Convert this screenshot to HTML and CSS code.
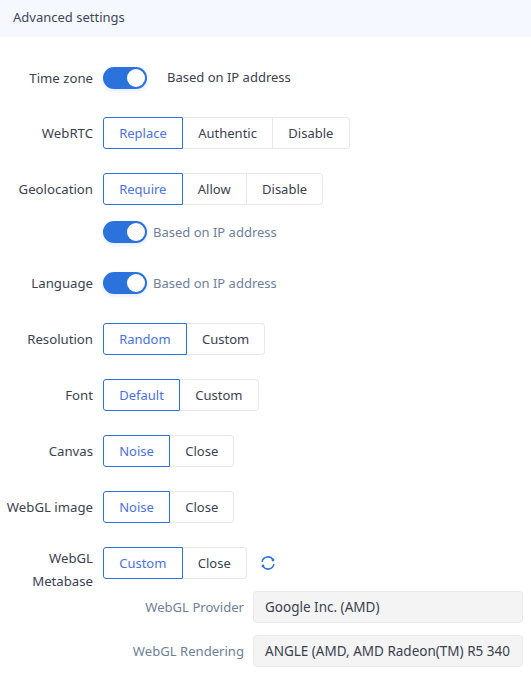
FILE: index.html
```html
<!DOCTYPE html>
<html lang="en">
<head>
<meta charset="utf-8">
<title>Advanced settings</title>
<link rel="stylesheet" href="styles.css">
</head>
<body>
<div class="panel-title">Advanced settings</div>
<form class="form">
  <div class="row row-first">
    <label class="label">Time zone</label>
    <div class="control"><span class="switch"><span class="knob"></span></span><span class="note note-wide">Based on IP address</span></div>
  </div>
  <div class="row">
    <label class="label">WebRTC</label>
    <div class="control"><div class="group"><span class="seg active">Replace</span><span class="seg">Authentic</span><span class="seg">Disable</span></div></div>
  </div>
  <div class="row row-tight">
    <label class="label">Geolocation</label>
    <div class="control"><div class="group"><span class="seg active">Require</span><span class="seg">Allow</span><span class="seg">Disable</span></div></div>
  </div>
  <div class="row row-sub">
    <label class="label"></label>
    <div class="control"><span class="switch"><span class="knob"></span></span><span class="note muted">Based on IP address</span></div>
  </div>
  <div class="row">
    <label class="label">Language</label>
    <div class="control"><span class="switch"><span class="knob"></span></span><span class="note muted">Based on IP address</span></div>
  </div>
  <div class="row">
    <label class="label">Resolution</label>
    <div class="control"><div class="group"><span class="seg active">Random</span><span class="seg">Custom</span></div></div>
  </div>
  <div class="row">
    <label class="label">Font</label>
    <div class="control"><div class="group"><span class="seg active">Default</span><span class="seg">Custom</span></div></div>
  </div>
  <div class="row">
    <label class="label">Canvas</label>
    <div class="control"><div class="group"><span class="seg active">Noise</span><span class="seg">Close</span></div></div>
  </div>
  <div class="row">
    <label class="label">WebGL image</label>
    <div class="control"><div class="group"><span class="seg active">Noise</span><span class="seg">Close</span></div></div>
  </div>
  <div class="row row-meta">
    <label class="label label-wrap">WebGL Metabase</label>
    <div class="control control-top"><div class="group"><span class="seg active">Custom</span><span class="seg">Close</span></div>
      <svg class="refresh" viewBox="0 0 16 16" width="16" height="16" aria-hidden="true">
        <path d="M2.1 6.8A6 6 0 0 1 13 4.6" />
        <path d="M13.9 9.2A6 6 0 0 1 3 11.4" />
        <circle cx="13" cy="5" r="1.4" class="dot"/>
        <circle cx="3" cy="11" r="1.4" class="dot"/>
      </svg>
    </div>
  </div>
  <div class="field">
    <label class="field-label">WebGL Provider</label>
    <div class="input">Google Inc. (AMD)</div>
  </div>
  <div class="field">
    <label class="field-label">WebGL Rendering</label>
    <div class="input">ANGLE (AMD, AMD Radeon(TM) R5 340</div>
  </div>
</form>
</body>
</html>
```
FILE: styles.css
```css
* { box-sizing: border-box; }
html, body { margin: 0; padding: 0; background: #fff; }
body {
  width: 531px;
  height: 675px;
  overflow: hidden;
  font-family: "Noto Sans", "Open Sans", sans-serif;
  font-size: 13px;
  color: #3a4150;
}
.panel-title {
  height: 37px;
  line-height: 35px;
  padding-left: 13px;
  background: #f5f8ff;
  color: #3f4757;
}
.form { padding-top: 25px; }
.row { display: flex; margin-bottom: 24px; min-height: 32px; }
.row-first { margin-bottom: 23px; }
.row-tight { margin-bottom: 11px; }
.row-sub { margin-bottom: 19px; }
.row-meta { height: 44px; margin-bottom: 0; }
.label {
  width: 93px;
  flex: none;
  text-align: right;
  font-size: 13.2px;
  line-height: 32px;
  white-space: nowrap;
}
.label-wrap { white-space: normal; line-height: 22.5px; padding-left: 30px; }
.control { display: flex; align-items: center; margin-left: 10px; }
.control-top { align-items: flex-start; }
.switch {
  position: relative;
  display: block;
  width: 44px;
  height: 22px;
  border-radius: 11px;
  background: #2b72dc;
  box-shadow: 0 2px 4px rgba(43, 114, 220, 0.15);
}
.knob {
  position: absolute;
  top: 2px;
  right: 2px;
  width: 18px;
  height: 18px;
  border-radius: 50%;
  background: #fff;
}
.note { margin-left: 6px; }
.note-wide { margin-left: 20px; margin-top: -3px; }
.muted { color: #6e7f99; }
.group { display: flex; height: 32px; }
.seg {
  display: block;
  padding: 0 15.2px;
  line-height: 30px;
  border: 1px solid #e6e8eb;
  border-left-width: 0;
  background: #fff;
  color: #3a4150;
}
.seg:first-child { border-radius: 3px 0 0 3px; border-left-width: 1px; }
.seg:last-child { border-radius: 0 4px 4px 0; }
.seg.active { border: 1px solid #2b72dc; color: #4a72df; }
.refresh { margin: 8px 0 0 13px; fill: none; stroke: #2b72dc; stroke-width: 1.5; }
.refresh .dot { fill: #2b72dc; stroke: none; }
.field { display: flex; align-items: center; margin-bottom: 12px; }
.field-label { width: 244px; flex: none; text-align: right; font-size: 13.1px; color: #6e7f99; }
.input {
  margin-left: 9px;
  width: 270px;
  height: 32px;
  padding-left: 11px;
  font-size: 13.5px;
  line-height: 30px;
  white-space: nowrap;
  overflow: hidden;
  background: #f4f4f4;
  border: 1px solid #e9e9e9;
  border-radius: 4px;
  color: #3a4150;
}
```
